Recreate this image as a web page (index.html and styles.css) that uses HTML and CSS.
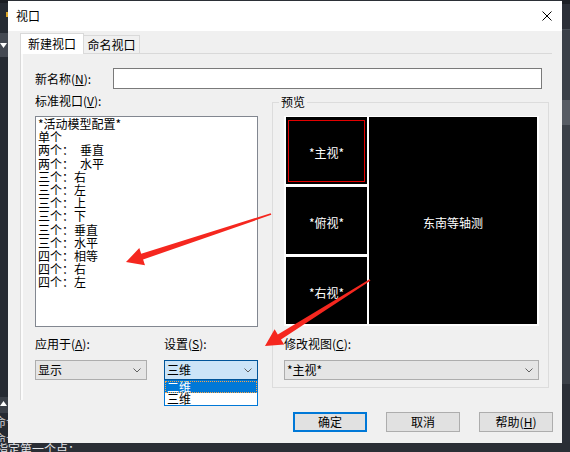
FILE: index.html
```html
<!DOCTYPE html>
<html lang="zh-CN">
<head>
<meta charset="utf-8">
<title>视口</title>
<link rel="stylesheet" href="styles.css">
</head>
<body>
<div class="app">
  <div class="app-main">
    <div class="gutter">
      <div class="gutter-top"><span class="dot"></span></div>
      <div class="gutter-block"><svg class="tri" width="7" height="5" viewBox="0 0 7 5"><path d="M0 0 H7 L3.5 5 Z" fill="#fff"/></svg></div>
      <div class="gutter-fill"></div>
      <div class="gutter-block small"><svg class="tri" width="7" height="5" viewBox="0 0 7 5"><path d="M0 5 H7 L3.5 0 Z" fill="#fff"/></svg></div>
      <div class="cmd-hist"><div class="cmd-line">命令：</div><div class="cmd-line">命令：</div></div>
    </div>
    <div class="canvas"></div>
    <div class="rail">
      <div class="rail-top"></div>
      <div class="rail-body"><div class="rail-thumb"></div></div>
      <div class="rail-bottom"></div>
    </div>
  </div>
  <div class="cmdline">指定第一个点：</div>
</div>

<div class="dialog">
  <div class="titlebar">
    <span class="title">视口</span>
    <span class="close"><svg width="10" height="10" viewBox="0 0 10 10"><path d="M0.5 0.5 L9.5 9.5 M9.5 0.5 L0.5 9.5" stroke="#000" stroke-width="1" fill="none"/></svg></span>
  </div>
  <div class="dlg-body">
    <div class="tabs">
      <div class="tab active">新建视口</div>
      <div class="tab">命名视口</div>
      <div class="tab-fill"></div>
    </div>
    <div class="panel">
      <div class="name-row">
        <div class="lbl name-lbl">新名称(<u>N</u>):</div>
        <div class="textbox"></div>
      </div>
      <div class="main-row">
        <div class="left-col">
          <div class="lbl">标准视口(<u>V</u>):</div>
          <ul class="listbox">
            <li>*活动模型配置*</li>
            <li>单个</li>
            <li>两个：&ensp;垂直</li>
            <li>两个：&ensp;水平</li>
            <li>三个：右</li>
            <li>三个：左</li>
            <li>三个：上</li>
            <li>三个：下</li>
            <li>三个：垂直</li>
            <li>三个：水平</li>
            <li>四个：相等</li>
            <li>四个：右</li>
            <li>四个：左</li>
          </ul>
          <div class="combo-row">
            <div class="field apply">
              <div class="lbl">应用于(<u>A</u>):</div>
              <div class="combo"><span>显示</span><svg class="chev" width="8" height="5" viewBox="0 0 8 5"><path d="M0.5 0.5 L4 4 L7.5 0.5" fill="none" stroke="#606060"/></svg></div>
            </div>
            <div class="field setting">
              <div class="lbl">设置(<u>S</u>):</div>
              <div class="combo open"><span>三维</span><svg class="chev" width="8" height="5" viewBox="0 0 8 5"><path d="M0.5 0.5 L4 4 L7.5 0.5" fill="none" stroke="#606060"/></svg></div>
              <ul class="dropdown">
                <li class="sel">二维</li>
                <li>三维</li>
              </ul>
            </div>
          </div>
        </div>
        <fieldset class="group">
          <legend>预览</legend>
          <div class="group-inner">
            <div class="preview">
              <div class="pane p1"><div class="active-view">*主视*</div></div>
              <div class="pane p-right">东南等轴测</div>
              <div class="pane">*俯视*</div>
              <div class="pane">*右视*</div>
            </div>
            <div class="lbl mod-lbl">修改视图(<u>C</u>):</div>
            <div class="combo wide"><span>*主视*</span><svg class="chev" width="8" height="5" viewBox="0 0 8 5"><path d="M0.5 0.5 L4 4 L7.5 0.5" fill="none" stroke="#606060"/></svg></div>
          </div>
        </fieldset>
      </div>
    </div>
    <div class="buttons">
      <div class="btn default">确定</div>
      <div class="btn">取消</div>
      <div class="btn">帮助(<u>H</u>)</div>
    </div>
  </div>
</div>

<svg class="arrows" width="570" height="452" viewBox="0 0 570 452">
  <polygon points="126,262 145,265.2 143.1,259.5 271.3,214.8 270.7,213.2 141.2,253.8 139.3,248.1" fill="#f5271f"/>
  <polygon points="265,346 284.2,344.6 281,339.5 370.4,280.7 369.6,279.3 277.8,334.4 274.6,329.3" fill="#f5271f"/>
</svg>
</body>
</html>
```

FILE: styles.css
```css
* { box-sizing: border-box; }
html, body { margin: 0; padding: 0; }
body {
  width: 570px;
  height: 452px;
  overflow: hidden;
  position: relative;
  font-family: "Noto Sans CJK SC", "Noto Sans", sans-serif;
  font-size: 12px;
  color: #000;
  background: #252a32;
}
ul { list-style: none; margin: 0; padding: 0; }
u { text-decoration: underline; text-underline-offset: 1px; }

/* background application */
.app { width: 570px; height: 452px; display: flex; flex-direction: column; }
.app-main { flex: 1; display: flex; min-height: 0; }
.gutter { width: 8px; display: flex; flex-direction: column; background: #252a32; }
.gutter-top { height: 33px; background: #262b33; border-top: 3px solid #1b1e24; padding: 9px 0 0 6px; }
.dot { display: block; width: 2px; height: 5px; background: #d9a326; }
.gutter-block { height: 24px; background: #444952; display: flex; align-items: center; padding-left: 0; }
.gutter-block.small { height: 16px; background: #3a3f47; align-items: flex-start; padding-top: 4px; }
.tri { display: block; }
.gutter-fill { flex: 1; background: #252a32; }
.cmd-hist { height: 29px; color: #cfd2d6; white-space: nowrap; }
.cmd-line { line-height: 17px; text-indent: -6px; }
.canvas { flex: 1; background: #2b2f36; }
.rail { width: 8px; display: flex; flex-direction: column; background: #3b4048; }
.rail-top { height: 30px; background: #2c3038; border-top: 4px solid #1d2026; border-bottom: 1px solid #4a5058; }
.rail-body { flex: 1; padding-top: 70px; }
.rail-thumb { height: 25px; background: #575c64; }
.rail-bottom { height: 58px; background: #2b2f37; }
.cmdline {
  height: 10px;
  overflow: hidden;
  background: #2a2e35;
  color: #e2e4e7;
  line-height: 14px;
  white-space: nowrap;
  text-indent: -4px;
}

/* dialog window */
.dialog {
  position: absolute;
  left: 8px;
  top: 1px;
  width: 554px;
  height: 442px;
  background: #f0f0f0;
  display: flex;
  flex-direction: column;
}
.titlebar {
  height: 30px;
  background: #fff;
  display: flex;
  align-items: center;
  justify-content: space-between;
  padding-left: 8px;
}
.title { line-height: 14px; }
.close { width: 30px; height: 30px; display: flex; align-items: center; justify-content: center; }
.close svg { display: block; }

.dlg-body { flex: 1; padding: 2px 9px 0 12px; }

.tabs { display: flex; align-items: flex-end; width: 532px; height: 21px; }
.tab {
  width: 56px;
  height: 19px;
  border: 1px solid #d9d9d9;
  border-left: 0;
  background: #f0f0f0;
  display: flex;
  align-items: center;
  justify-content: center;
  line-height: 14px;
}
.tab.active {
  width: 64px;
  height: 21px;
  border-left: 1px solid #d9d9d9;
  border-bottom: 0;
  background: #fff;
  padding-bottom: 1px;
}
.tab-fill { flex: 1; height: 1px; border-bottom: 1px solid #d9d9d9; }

.panel {
  width: 532px;
  height: 346px;
  border-left: 1px solid #d9d9d9;
  box-shadow: inset 2px 0 0 #fbfbfb;
  padding: 14px 0 0 14px;
}
.lbl { line-height: 14px; height: 14px; white-space: nowrap; }
.name-row { display: flex; align-items: center; height: 21px; }
.name-lbl { width: 78px; }
.textbox { width: 429px; height: 21px; border: 1px solid #7a7a7a; background: #fff; }

.main-row { display: flex; align-items: flex-start; margin-top: 5px; }
.left-col { width: 223px; margin-right: 14px; }
.left-col > .lbl { margin-bottom: 8px; }
.listbox {
  height: 211px;
  border: 1px solid #828790;
  background: #fff;
  padding: 0 2px;
  line-height: 13.2px;
  white-space: nowrap;
}
.combo-row { display: flex; gap: 17px; margin-top: 10px; }
.field { position: relative; }
.field .lbl { margin-bottom: 9px; }
.field.apply { width: 112px; }
.field.setting { width: 94px; }

.combo {
  height: 20px;
  border: 1px solid #adadad;
  background: #e5e5e5;
  display: flex;
  align-items: center;
  justify-content: space-between;
  padding: 0 5px 0 2px;
  line-height: 14px;
}
.combo.open { background: #cce4f7; border-color: #005499; }
.chev { display: block; }
.combo.wide { width: 255px; }

.dropdown {
  position: absolute;
  left: 0;
  top: 100%;
  width: 94px;
  border: 1px solid #0078d7;
  background: #fff;
}
.dropdown li { height: 12px; line-height: 12px; padding-left: 2px; }
.dropdown li.sel {
  background: #0078d7;
  color: #fff;
  border: 1px dotted #f7a64a;
  padding-left: 1px;
  line-height: 10px;
}

.group {
  width: 277px;
  margin: 0;
  padding: 0;
  border: 1px solid #dcdcdc;
  min-width: 0;
}
.group legend {
  margin-left: 6px;
  padding: 0 2px;
  line-height: 16px;
}
.group-inner { padding: 6px 9px 7px 11px; }
.preview {
  width: 255px;
  height: 210px;
  background: #fff;
  padding: 1px 2px 2px 2px;
  display: grid;
  grid-template-columns: 81px 168px;
  grid-template-rows: repeat(3, 1fr);
  column-gap: 2px;
  row-gap: 3px;
}
.pane {
  background: #000;
  color: #fff;
  display: flex;
  align-items: center;
  justify-content: center;
  padding-top: 5px;
  line-height: 14px;
}
.pane.p1 { padding: 3px 2px 2px 2px; align-items: stretch; }
.active-view {
  flex: 1;
  border: 1px solid #e30000;
  display: flex;
  align-items: center;
  justify-content: center;
  padding-top: 4px;
}
.pane.p-right { grid-column: 2; grid-row: 1 / 4; }
.mod-lbl { margin-top: 11px; margin-bottom: 9px; }

.buttons { display: flex; justify-content: flex-end; gap: 19px; margin-top: 12px; }
.btn {
  width: 74px;
  height: 20px;
  border: 1px solid #adadad;
  background: #e1e1e1;
  display: flex;
  align-items: center;
  justify-content: center;
  line-height: 14px;
}
.btn.default { border: 2px solid #0078d7; }

.arrows { position: absolute; left: 0; top: 0; pointer-events: none; }
```
